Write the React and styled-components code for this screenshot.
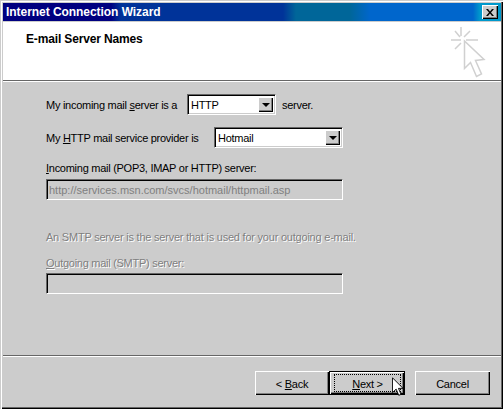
import styled, { createGlobalStyle } from 'styled-components';

const GlobalStyle = createGlobalStyle`
  html, body {
    margin: 0;
    padding: 0;
    background: #cccccc;
  }
`;

const Key = styled.span`
  text-decoration: underline;
`;

const Combo = ({ value, width }) => (
  <S.Combo $width={width}>
    <S.ComboValue>{value}</S.ComboValue>
    <S.ArrowButton><S.Arrow /></S.ArrowButton>
  </S.Combo>
);

const WizardIcon = () => (
  <svg width="36" height="52" viewBox="0 0 36 52">
    <g stroke="#d0d0d0" strokeWidth="1.5" fill="none">
      <path d="M11 0 V9 M1 13 H11 M5 4 L10 10 M20 4 L14 10 M5 22 L11 16 M16 13 H28" />
      <path
        d="M14.5 14 V41.5 L20.5 35.5 L26.5 49.5 L31.5 47 L25.5 33.5 L34 32.5 Z"
        fill="#ffffff"
      />
    </g>
  </svg>
);

const Cursor = () => (
  <S.Cursor width="12" height="20" viewBox="0 0 13 21">
    <path
      d="M0.5 0.5 V16.5 L4.5 12.8 L7.3 19.5 L9.8 18.5 L7 12 L12 12 Z"
      fill="#ffffff"
      stroke="#000000"
      strokeWidth="1"
    />
  </S.Cursor>
);

const App = () => (
  <S.Frame>
    <GlobalStyle />
    <S.TitleBar>
      <S.TitleText>Internet Connection Wizard</S.TitleText>
      <S.CloseButton>
        <svg width="8" height="7" viewBox="0 0 8 7">
          <path d="M0 0 H2 L4 2.5 L6 0 H8 L5 3.5 L8 7 H6 L4 4.5 L2 7 H0 L3 3.5 Z" fill="#000000" />
        </svg>
      </S.CloseButton>
    </S.TitleBar>

    <S.Header>
      <S.HeaderTitle>E-mail Server Names</S.HeaderTitle>
      <WizardIcon />
    </S.Header>
    <S.Divider />

    <S.Body>
      <S.Row>
        <S.Label $width={141}>My incoming mail <Key>s</Key>erver is a</S.Label>
        <Combo value="HTTP" width={89} />
        <S.TrailingLabel>server.</S.TrailingLabel>
      </S.Row>
      <S.Row>
        <S.Label $width={168}>My <Key>H</Key>TTP mail service provider is</S.Label>
        <Combo value="Hotmail" width={129} />
      </S.Row>
      <S.FieldLabel>
        <Key>I</Key>ncoming mail (POP3, IMAP or HTTP) server:
      </S.FieldLabel>
      <S.Input disabled value="http://services.msn.com/svcs/hotmail/httpmail.asp" />
      <S.Note>An SMTP server is the server that is used for your outgoing e-mail.</S.Note>
      <S.DisabledLabel>
        <Key>O</Key>utgoing mail (SMTP) server:
      </S.DisabledLabel>
      <S.Input disabled value="" />
    </S.Body>

    <S.Divider />
    <S.Footer>
      <S.Button $width={74}>
        <span>&lt; <Key>B</Key>ack</span>
      </S.Button>
      <S.DefaultButton>
        <S.Focus>
          <span><Key>N</Key>ext &gt;</span>
        </S.Focus>
        <Cursor />
      </S.DefaultButton>
      <S.CancelButton $width={75}>Cancel</S.CancelButton>
    </S.Footer>
  </S.Frame>
);

const sunken = `
  border: 1px solid;
  border-color: #666666 #ffffff #ffffff #666666;
  box-shadow: inset 1px 1px 0 #000000, inset -1px -1px 0 #cccccc;
`;

const raised = `
  background: #cccccc;
  box-shadow: inset 1px 1px 0 #ffffff, inset -1px -1px 0 #000000, inset -2px -2px 0 #808080;
`;

const S = {
  Frame: styled.div`
    width: 503px;
    height: 409px;
    box-sizing: border-box;
    padding: 3px 2px 2px 3px;
    display: flex;
    flex-direction: column;
    background: #cccccc;
    overflow: hidden;
    font-family: "Liberation Sans", Arial, sans-serif;
    font-size: 11px;
    letter-spacing: -0.27px;
    color: #000000;
    box-shadow:
      inset 1px 1px 0 #cccccc,
      inset 2px 2px 0 #ffffff,
      inset -1px -1px 0 #000000,
      inset -2px -2px 0 #666666;
  `,
  TitleBar: styled.div`
    height: 18px;
    flex: none;
    display: flex;
    align-items: center;
    justify-content: space-between;
    padding: 0 3px 0 3px;
    margin-bottom: 1px;
    background: linear-gradient(
      90deg,
      #000080 0,
      #000080 108px,
      #003399 118px,
      #003399 280px,
      #006699 293px,
      #006699 347px,
      #0066cc 367px,
      #0066cc 470px,
      #0099cc 477px
    );
  `,
  TitleText: styled.span`
    color: #ffffff;
    font-weight: bold;
    font-size: 12px;
    letter-spacing: -0.05px;
  `,
  CloseButton: styled.div`
    width: 16px;
    height: 14px;
    display: flex;
    align-items: center;
    justify-content: center;
    ${raised}
  `,
  Header: styled.div`
    height: 58px;
    flex: none;
    display: flex;
    justify-content: space-between;
    background: #ffffff;
    padding: 5px 15px 1px 23px;
    box-sizing: border-box;
  `,
  HeaderTitle: styled.div`
    font-weight: bold;
    font-size: 12px;
    line-height: 14px;
    letter-spacing: -0.15px;
    margin-top: 5px;
  `,
  Divider: styled.div`
    height: 1px;
    flex: none;
    background: #666666;
    border-bottom: 1px solid #ffffff;
  `,
  Body: styled.div`
    flex: 1;
    padding: 12px 0 0 43px;
    display: flex;
    flex-direction: column;
    align-items: flex-start;
  `,
  Row: styled.div`
    display: flex;
    align-items: center;
    height: 21px;
    & + & {
      margin-top: 12px;
    }
  `,
  Label: styled.span`
    flex: none;
    width: ${(p) => p.$width}px;
    white-space: nowrap;
  `,
  TrailingLabel: styled.span`
    margin-left: 6px;
    white-space: nowrap;
  `,
  Combo: styled.div`
    width: ${(p) => p.$width}px;
    height: 21px;
    box-sizing: border-box;
    display: flex;
    align-items: center;
    justify-content: space-between;
    background: #ffffff;
    padding: 2px;
    ${sunken}
  `,
  ComboValue: styled.span`
    padding-left: 1px;
  `,
  ArrowButton: styled.div`
    width: 15px;
    height: 15px;
    display: flex;
    align-items: center;
    justify-content: center;
    ${raised}
  `,
  Arrow: styled.div`
    width: 0;
    height: 0;
    border-left: 4px solid transparent;
    border-right: 4px solid transparent;
    border-top: 4px solid #000000;
  `,
  FieldLabel: styled.div`
    margin-top: 13px;
    height: 14px;
    line-height: 14px;
    margin-bottom: 4px;
  `,
  Input: styled.input`
    width: 297px;
    height: 21px;
    box-sizing: border-box;
    margin: 0;
    padding: 0 2px;
    background: #cccccc;
    color: #808080;
    font: inherit;
    outline: none;
    ${sunken}
  `,
  Note: styled.div`
    margin-top: 30px;
    height: 14px;
    line-height: 14px;
    letter-spacing: -0.22px;
    color: #808080;
    text-shadow: 1px 1px 0 #ffffff;
  `,
  DisabledLabel: styled.div`
    margin-top: 12px;
    height: 14px;
    line-height: 14px;
    margin-bottom: 3px;
    color: #808080;
    text-shadow: 1px 1px 0 #ffffff;
  `,
  Footer: styled.div`
    flex: none;
    height: 50px;
    box-sizing: border-box;
    padding: 14px 11px 0 0;
    display: flex;
    align-items: flex-start;
    justify-content: flex-end;
  `,
  Button: styled.div`
    width: ${(p) => p.$width}px;
    height: 24px;
    box-sizing: border-box;
    padding-top: 1px;
    display: flex;
    align-items: center;
    justify-content: center;
    white-space: pre;
    ${raised}
  `,
  DefaultButton: styled.div`
    position: relative;
    width: 76px;
    height: 24px;
    box-sizing: border-box;
    padding: 2px 3px 2px 4px;
    border: 1px solid #000000;
    ${raised}
  `,
  Focus: styled.div`
    height: 100%;
    box-sizing: border-box;
    padding-top: 1px;
    display: flex;
    align-items: center;
    justify-content: center;
    border: 1px dotted #000000;
    white-space: pre;
  `,
  CancelButton: styled.div`
    width: ${(p) => p.$width}px;
    height: 24px;
    box-sizing: border-box;
    padding-top: 1px;
    margin-left: 10px;
    display: flex;
    align-items: center;
    justify-content: center;
    ${raised}
  `,
  Cursor: styled.svg`
    position: absolute;
    left: 62px;
    top: 5px;
  `,
};

export default App;
